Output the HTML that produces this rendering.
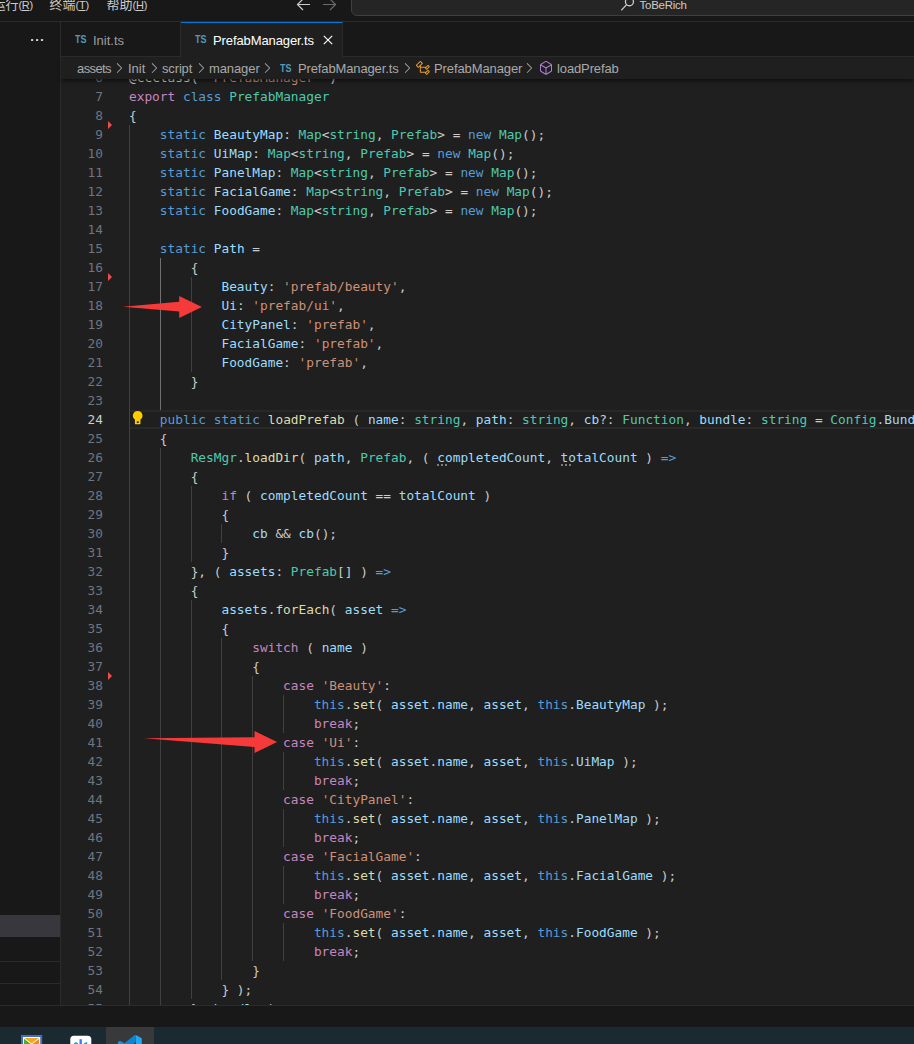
<!DOCTYPE html>
<html lang="zh-CN">
<head>
<meta charset="utf-8">
<title>PrefabManager.ts - ToBeRich</title>
<style>
html,body{margin:0;padding:0}
body{width:914px;height:1044px;overflow:hidden;position:relative;background:#1f1f1f;color:#cccccc;
 font-family:"Liberation Sans","Noto Sans CJK SC",sans-serif;font-size:13px}
.abs{position:absolute}
#title{left:0;top:0;width:914px;height:21px;background:#181818;border-bottom:1px solid #2b2b2b;overflow:hidden}
#title .m .l{font-size:11px;letter-spacing:-0.3px}
#title .m u{text-decoration-thickness:1px;text-underline-offset:1px}
#title .m{position:absolute;top:-4.4px;line-height:18px;font-size:13px;color:#cccccc;white-space:nowrap}
#search{left:351px;top:-10px;width:600px;height:24px;border:1px solid #404040;border-radius:6px;background:#252525}
#side{left:0;top:22px;width:60px;height:983px;background:#181818;border-right:1px solid #2b2b2b}
#tabs{left:61px;top:22px;width:853px;height:34px;background:#181818;border-bottom:1px solid #2b2b2b}
.tab{position:absolute;top:0;height:34px;border-right:1px solid #2b2b2b;white-space:nowrap}
.tab .lbl{position:absolute;top:10px;line-height:18px;font-size:13px}
.ts{position:absolute;font-weight:bold;font-size:11px;color:#519aba;line-height:12px;transform:scaleX(.82);transform-origin:0 0}
.cv{position:absolute;top:3px;fill:#a9a9a9}
#crumbs{left:61px;top:57px;width:853px;height:22px;background:#1f1f1f;white-space:nowrap;z-index:3;box-shadow:0 3px 4px -1px rgba(0,0,0,.55)}
#crumbs span{position:absolute;top:2.5px;line-height:18px;font-size:13px;color:#a9a9a9}
#crumbs svg{position:absolute}
#ed{left:61px;top:79px;width:853px;height:926px;overflow:hidden;background:#1f1f1f;
 font-family:"DejaVu Sans Mono","Liberation Mono",monospace;font-size:12.8px;line-height:19px}
.ln{position:absolute;left:0;width:853px;height:19px;white-space:pre}
.ln .n{position:absolute;left:0;width:42px;text-align:right;color:#6e7681;font-weight:normal}
.ln .tx{position:absolute;left:68px;top:0;color:#cccccc}
.ln.cur{box-sizing:border-box}
.ln.cur::before{content:"";position:absolute;left:68px;right:0;top:0;height:19px;box-sizing:border-box;border-top:2px solid #282828;border-bottom:2px solid #282828}
.ln.cur .n{color:#cccccc}
.g{position:absolute;top:0;width:1px;height:19px;background:#404040}
.g.ga{background:#707070}
.k{color:#569cd6}.c{color:#c586c0}.t{color:#4ec9b0}.v{color:#9cdcfe}.f{color:#dcdcaa}.s{color:#ce9178}
.h{position:relative}
.h::after{content:"";position:absolute;left:0;top:14.4px;width:2px;height:2px;border-radius:1px;background:rgba(238,238,238,.6);box-shadow:4px 0 rgba(238,238,238,.6),8px 0 rgba(238,238,238,.6)}
.tri{position:absolute;width:0;height:0;border-left:4.6px solid #f14c4c;border-top:4px solid transparent;border-bottom:4px solid transparent}
#status{left:0;top:1005px;width:914px;height:22px;background:#181818;border-top:1px solid #2b2b2b;box-sizing:border-box;z-index:4}
#task{left:0;top:1027px;width:914px;height:17px;background:#1b2a31;overflow:hidden}
</style>
</head>
<body>
<div id="title" class="abs">
  <span class="m" style="left:-7.6px">运行<span class="l">(<u>R</u>)</span></span>
  <span class="m" style="left:49.6px">终端<span class="l">(<u>T</u>)</span></span>
  <span class="m" style="left:106.6px">帮助<span class="l">(<u>H</u>)</span></span>
  <svg class="abs" style="left:295.4px;top:-4px" width="44" height="16" viewBox="0 0 44 16" fill="none" stroke-width="1.2">
    <path d="M15 8.5H2.5M8 3L2.5 8.5L8 14" stroke="#cccccc"/>
    <path d="M28 8.5H40.5M35 3L40.5 8.5L35 14" stroke="#6b6b6b"/>
  </svg>
  <div id="search" class="abs"></div>
  <svg class="abs" style="left:621px;top:-2px" width="14" height="14" viewBox="0 0 14 14" fill="none" stroke="#cccccc" stroke-width="1.3"><circle cx="8.45" cy="3.75" r="4"/><path d="M5.6 6.6L0.3 12.3"/></svg>
  <span class="m" style="left:639.5px;top:-4.3px;font-size:11.5px;letter-spacing:-0.25px">ToBeRich</span>
</div>
<div id="side" class="abs">
  <svg class="abs" style="left:28px;top:14px" width="18" height="8" viewBox="28 36 18 8" fill="#d0d0d0"><rect x="31" y="39" width="2.2" height="2.1" rx=".5"/><rect x="36" y="39" width="2.2" height="2.1" rx=".5"/><rect x="40.9" y="39" width="2.2" height="2.1" rx=".5"/></svg>
  <div class="abs" style="left:0;top:893px;width:60px;height:22px;background:#37373d"></div>
  <div class="abs" style="left:0;top:939px;width:60px;height:1px;background:#2b2b2b"></div>
  <div class="abs" style="left:0;top:961px;width:60px;height:1px;background:#2b2b2b"></div>
</div>
<div id="tabs" class="abs">
  <div class="tab" style="left:0;width:119px"><span class="ts" style="left:14px;top:11px">TS</span><span class="lbl" style="left:32px;color:#9d9d9d">Init.ts</span></div>
  <div class="tab" style="left:120px;width:161px;height:34px;background:#1f1f1f;border-top:1px solid #0078d4;top:0">
    <span class="ts" style="left:14px;top:10px">TS</span><span class="lbl" style="left:32px;top:9px;color:#ffffff;letter-spacing:-0.1px">PrefabManager.ts</span>
    <svg class="abs" style="left:142.2px;top:12px" width="10" height="10" viewBox="0 0 10 10" stroke="#ffffff" stroke-width="1.15" fill="none"><path d="M0.8 0.8L9.2 9.2M9.2 0.8L0.8 9.2"/></svg>
  </div>
</div>
<div id="crumbs" class="abs">
  <span style="left:16px;letter-spacing:-0.6px">assets</span><svg class="cv" style="left:49.8px" width="16" height="16" viewBox="0 0 16 16"><path d="M10.072 8.024L5.715 3.667l.618-.62L11 7.716v.618L6.333 13l-.618-.619 4.357-4.357z"/></svg>
  <span style="left:67px">Init</span><svg class="cv" style="left:84.8px" width="16" height="16" viewBox="0 0 16 16"><path d="M10.072 8.024L5.715 3.667l.618-.62L11 7.716v.618L6.333 13l-.618-.619 4.357-4.357z"/></svg>
  <span style="left:101px;letter-spacing:-0.15px">script</span><svg class="cv" style="left:131.6px" width="16" height="16" viewBox="0 0 16 16"><path d="M10.072 8.024L5.715 3.667l.618-.62L11 7.716v.618L6.333 13l-.618-.619 4.357-4.357z"/></svg>
  <span style="left:148px;letter-spacing:-0.1px">manager</span><svg class="cv" style="left:198.3px" width="16" height="16" viewBox="0 0 16 16"><path d="M10.072 8.024L5.715 3.667l.618-.62L11 7.716v.618L6.333 13l-.618-.619 4.357-4.357z"/></svg>
  <b class="ts" style="left:219px;top:5px">TS</b>
  <span style="left:237px;letter-spacing:-0.13px">PrefabManager.ts</span><svg class="cv" style="left:337.8px" width="16" height="16" viewBox="0 0 16 16"><path d="M10.072 8.024L5.715 3.667l.618-.62L11 7.716v.618L6.333 13l-.618-.619 4.357-4.357z"/></svg>
  <svg class="abs" style="left:354px;top:3px" width="16" height="16" viewBox="0 0 16 16"><path fill="#ee9d28" d="M11.34 9.71h.71l2.67-2.67v-.71L13.38 5h-.7l-1.82 1.8h-5V5.56l1.86-1.85V3l-2-2H5L1 5v.71l2 2h.71l1.14-1.15v5.79l.5.5H10v.52l1.33 1.34h.71l2.67-2.67v-.71L13.37 10h-.7l-1.86 1.85h-5v-4H10v.48l1.34 1.38zm1.69-3.65l.63.63-2 2-.63-.63 2-2zm0 5l.63.63-2 2-.63-.63 2-2zM3.35 6.65l-1.29-1.3 3.29-3.29 1.3 1.29-3.3 3.3z"/></svg>
  <span style="left:373px;letter-spacing:-0.1px">PrefabManager</span><svg class="cv" style="left:460.3px" width="16" height="16" viewBox="0 0 16 16"><path d="M10.072 8.024L5.715 3.667l.618-.62L11 7.716v.618L6.333 13l-.618-.619 4.357-4.357z"/></svg>
  <svg class="abs" style="left:476.5px;top:3px" width="16" height="16" viewBox="0 0 16 16"><path fill="#b180d7" d="M13.51 4l-5-3h-1l-5 3-.49.86v6l.49.85 5 3h1l5-3 .49-.85v-6L13.51 4zm-6 9.56l-4.5-2.7V5.7l4.5 2.45v5.41zM3.27 4.7l4.74-2.84 4.74 2.84-4.74 2.59L3.27 4.7zm9.74 6.16l-4.5 2.7V8.15l4.5-2.45v5.16z"/></svg>
  <span style="left:496px;letter-spacing:-0.12px">loadPrefab</span>
</div>
<div id="ed" class="abs">
<div class="ln" style="top:-11px"><b class="n">6</b><span class="tx">@<span class="f">ccclass</span>( <span class="s">'PrefabManager'</span> )</span></div>
<div class="ln" style="top:8px"><b class="n">7</b><span class="tx"><span class="c">export</span> <span class="k">class</span> <span class="t">PrefabManager</span></span></div>
<div class="ln" style="top:27px"><b class="n">8</b><span class="tx">{</span></div>
<div class="ln" style="top:46px"><b class="n">9</b><i class="g" style="left:68px"></i><span class="tx">    <span class="k">static</span> <span class="v">BeautyMap</span>: <span class="t">Map</span>&lt;<span class="t">string</span>, <span class="t">Prefab</span>&gt; = <span class="k">new</span> <span class="t">Map</span>();</span></div>
<div class="ln" style="top:65px"><b class="n">10</b><i class="g" style="left:68px"></i><span class="tx">    <span class="k">static</span> <span class="v">UiMap</span>: <span class="t">Map</span>&lt;<span class="t">string</span>, <span class="t">Prefab</span>&gt; = <span class="k">new</span> <span class="t">Map</span>();</span></div>
<div class="ln" style="top:84px"><b class="n">11</b><i class="g" style="left:68px"></i><span class="tx">    <span class="k">static</span> <span class="v">PanelMap</span>: <span class="t">Map</span>&lt;<span class="t">string</span>, <span class="t">Prefab</span>&gt; = <span class="k">new</span> <span class="t">Map</span>();</span></div>
<div class="ln" style="top:103px"><b class="n">12</b><i class="g" style="left:68px"></i><span class="tx">    <span class="k">static</span> <span class="v">FacialGame</span>: <span class="t">Map</span>&lt;<span class="t">string</span>, <span class="t">Prefab</span>&gt; = <span class="k">new</span> <span class="t">Map</span>();</span></div>
<div class="ln" style="top:122px"><b class="n">13</b><i class="g" style="left:68px"></i><span class="tx">    <span class="k">static</span> <span class="v">FoodGame</span>: <span class="t">Map</span>&lt;<span class="t">string</span>, <span class="t">Prefab</span>&gt; = <span class="k">new</span> <span class="t">Map</span>();</span></div>
<div class="ln" style="top:141px"><b class="n">14</b><i class="g" style="left:68px"></i><span class="tx"></span></div>
<div class="ln" style="top:160px"><b class="n">15</b><i class="g" style="left:68px"></i><span class="tx">    <span class="k">static</span> <span class="v">Path</span> =</span></div>
<div class="ln" style="top:179px"><b class="n">16</b><i class="g" style="left:68px"></i><i class="g ga" style="left:99px"></i><span class="tx">        {</span></div>
<div class="ln" style="top:198px"><b class="n">17</b><i class="g" style="left:68px"></i><i class="g ga" style="left:99px"></i><i class="g" style="left:130px"></i><span class="tx">            <span class="v">Beauty</span>: <span class="s">'prefab/beauty'</span>,</span></div>
<div class="ln" style="top:217px"><b class="n">18</b><i class="g" style="left:68px"></i><i class="g ga" style="left:99px"></i><i class="g" style="left:130px"></i><span class="tx">            <span class="v">Ui</span>: <span class="s">'prefab/ui'</span>,</span></div>
<div class="ln" style="top:236px"><b class="n">19</b><i class="g" style="left:68px"></i><i class="g ga" style="left:99px"></i><i class="g" style="left:130px"></i><span class="tx">            <span class="v">CityPanel</span>: <span class="s">'prefab'</span>,</span></div>
<div class="ln" style="top:255px"><b class="n">20</b><i class="g" style="left:68px"></i><i class="g ga" style="left:99px"></i><i class="g" style="left:130px"></i><span class="tx">            <span class="v">FacialGame</span>: <span class="s">'prefab'</span>,</span></div>
<div class="ln" style="top:274px"><b class="n">21</b><i class="g" style="left:68px"></i><i class="g ga" style="left:99px"></i><i class="g" style="left:130px"></i><span class="tx">            <span class="v">FoodGame</span>: <span class="s">'prefab'</span>,</span></div>
<div class="ln" style="top:293px"><b class="n">22</b><i class="g" style="left:68px"></i><i class="g ga" style="left:99px"></i><span class="tx">        }</span></div>
<div class="ln" style="top:312px"><b class="n">23</b><i class="g" style="left:68px"></i><i class="g ga" style="left:99px"></i><span class="tx"></span></div>
<div class="ln cur" style="top:331px"><b class="n">24</b><i class="g" style="left:68px"></i><span class="tx">    <span class="k">public</span> <span class="k">static</span> <span class="f">loadPrefab</span> ( <span class="v">name</span>: <span class="t">string</span>, <span class="v">path</span>: <span class="t">string</span>, <span class="v">cb</span>?: <span class="t">Function</span>, <span class="v">bundle</span>: <span class="t">string</span> = <span class="t">Config</span>.<span class="v">BundleName</span> )</span></div>
<div class="ln" style="top:350px"><b class="n">25</b><i class="g" style="left:68px"></i><span class="tx">    {</span></div>
<div class="ln" style="top:369px"><b class="n">26</b><i class="g" style="left:68px"></i><i class="g" style="left:99px"></i><span class="tx">        <span class="t">ResMgr</span>.<span class="f">loadDir</span>( <span class="v">path</span>, <span class="t">Prefab</span>, ( <span class="v h">completedCount</span>, <span class="v h">totalCount</span> ) <span class="k">=&gt;</span></span></div>
<div class="ln" style="top:388px"><b class="n">27</b><i class="g" style="left:68px"></i><i class="g" style="left:99px"></i><span class="tx">        {</span></div>
<div class="ln" style="top:407px"><b class="n">28</b><i class="g" style="left:68px"></i><i class="g" style="left:99px"></i><i class="g" style="left:130px"></i><span class="tx">            <span class="c">if</span> ( <span class="v">completedCount</span> == <span class="v">totalCount</span> )</span></div>
<div class="ln" style="top:426px"><b class="n">29</b><i class="g" style="left:68px"></i><i class="g" style="left:99px"></i><i class="g" style="left:130px"></i><span class="tx">            {</span></div>
<div class="ln" style="top:445px"><b class="n">30</b><i class="g" style="left:68px"></i><i class="g" style="left:99px"></i><i class="g" style="left:130px"></i><i class="g" style="left:160px"></i><span class="tx">                <span class="v">cb</span> &amp;&amp; <span class="v">cb</span>();</span></div>
<div class="ln" style="top:464px"><b class="n">31</b><i class="g" style="left:68px"></i><i class="g" style="left:99px"></i><i class="g" style="left:130px"></i><span class="tx">            }</span></div>
<div class="ln" style="top:483px"><b class="n">32</b><i class="g" style="left:68px"></i><i class="g" style="left:99px"></i><span class="tx">        }, ( <span class="v">assets</span>: <span class="t">Prefab</span>[] ) <span class="k">=&gt;</span></span></div>
<div class="ln" style="top:502px"><b class="n">33</b><i class="g" style="left:68px"></i><i class="g" style="left:99px"></i><span class="tx">        {</span></div>
<div class="ln" style="top:521px"><b class="n">34</b><i class="g" style="left:68px"></i><i class="g" style="left:99px"></i><i class="g" style="left:130px"></i><span class="tx">            <span class="v">assets</span>.<span class="f">forEach</span>( <span class="v">asset</span> <span class="k">=&gt;</span></span></div>
<div class="ln" style="top:540px"><b class="n">35</b><i class="g" style="left:68px"></i><i class="g" style="left:99px"></i><i class="g" style="left:130px"></i><span class="tx">            {</span></div>
<div class="ln" style="top:559px"><b class="n">36</b><i class="g" style="left:68px"></i><i class="g" style="left:99px"></i><i class="g" style="left:130px"></i><i class="g" style="left:160px"></i><span class="tx">                <span class="c">switch</span> ( <span class="v">name</span> )</span></div>
<div class="ln" style="top:578px"><b class="n">37</b><i class="g" style="left:68px"></i><i class="g" style="left:99px"></i><i class="g" style="left:130px"></i><i class="g" style="left:160px"></i><span class="tx">                {</span></div>
<div class="ln" style="top:597px"><b class="n">38</b><i class="g" style="left:68px"></i><i class="g" style="left:99px"></i><i class="g" style="left:130px"></i><i class="g" style="left:160px"></i><i class="g" style="left:191px"></i><span class="tx">                    <span class="c">case</span> <span class="s">'Beauty'</span>:</span></div>
<div class="ln" style="top:616px"><b class="n">39</b><i class="g" style="left:68px"></i><i class="g" style="left:99px"></i><i class="g" style="left:130px"></i><i class="g" style="left:160px"></i><i class="g" style="left:191px"></i><i class="g" style="left:222px"></i><span class="tx">                        <span class="k">this</span>.<span class="f">set</span>( <span class="v">asset</span>.<span class="v">name</span>, <span class="v">asset</span>, <span class="k">this</span>.<span class="v">BeautyMap</span> );</span></div>
<div class="ln" style="top:635px"><b class="n">40</b><i class="g" style="left:68px"></i><i class="g" style="left:99px"></i><i class="g" style="left:130px"></i><i class="g" style="left:160px"></i><i class="g" style="left:191px"></i><i class="g" style="left:222px"></i><span class="tx">                        <span class="c">break</span>;</span></div>
<div class="ln" style="top:654px"><b class="n">41</b><i class="g" style="left:68px"></i><i class="g" style="left:99px"></i><i class="g" style="left:130px"></i><i class="g" style="left:160px"></i><i class="g" style="left:191px"></i><span class="tx">                    <span class="c">case</span> <span class="s">'Ui'</span>:</span></div>
<div class="ln" style="top:673px"><b class="n">42</b><i class="g" style="left:68px"></i><i class="g" style="left:99px"></i><i class="g" style="left:130px"></i><i class="g" style="left:160px"></i><i class="g" style="left:191px"></i><i class="g" style="left:222px"></i><span class="tx">                        <span class="k">this</span>.<span class="f">set</span>( <span class="v">asset</span>.<span class="v">name</span>, <span class="v">asset</span>, <span class="k">this</span>.<span class="v">UiMap</span> );</span></div>
<div class="ln" style="top:692px"><b class="n">43</b><i class="g" style="left:68px"></i><i class="g" style="left:99px"></i><i class="g" style="left:130px"></i><i class="g" style="left:160px"></i><i class="g" style="left:191px"></i><i class="g" style="left:222px"></i><span class="tx">                        <span class="c">break</span>;</span></div>
<div class="ln" style="top:711px"><b class="n">44</b><i class="g" style="left:68px"></i><i class="g" style="left:99px"></i><i class="g" style="left:130px"></i><i class="g" style="left:160px"></i><i class="g" style="left:191px"></i><span class="tx">                    <span class="c">case</span> <span class="s">'CityPanel'</span>:</span></div>
<div class="ln" style="top:730px"><b class="n">45</b><i class="g" style="left:68px"></i><i class="g" style="left:99px"></i><i class="g" style="left:130px"></i><i class="g" style="left:160px"></i><i class="g" style="left:191px"></i><i class="g" style="left:222px"></i><span class="tx">                        <span class="k">this</span>.<span class="f">set</span>( <span class="v">asset</span>.<span class="v">name</span>, <span class="v">asset</span>, <span class="k">this</span>.<span class="v">PanelMap</span> );</span></div>
<div class="ln" style="top:749px"><b class="n">46</b><i class="g" style="left:68px"></i><i class="g" style="left:99px"></i><i class="g" style="left:130px"></i><i class="g" style="left:160px"></i><i class="g" style="left:191px"></i><i class="g" style="left:222px"></i><span class="tx">                        <span class="c">break</span>;</span></div>
<div class="ln" style="top:768px"><b class="n">47</b><i class="g" style="left:68px"></i><i class="g" style="left:99px"></i><i class="g" style="left:130px"></i><i class="g" style="left:160px"></i><i class="g" style="left:191px"></i><span class="tx">                    <span class="c">case</span> <span class="s">'FacialGame'</span>:</span></div>
<div class="ln" style="top:787px"><b class="n">48</b><i class="g" style="left:68px"></i><i class="g" style="left:99px"></i><i class="g" style="left:130px"></i><i class="g" style="left:160px"></i><i class="g" style="left:191px"></i><i class="g" style="left:222px"></i><span class="tx">                        <span class="k">this</span>.<span class="f">set</span>( <span class="v">asset</span>.<span class="v">name</span>, <span class="v">asset</span>, <span class="k">this</span>.<span class="v">FacialGame</span> );</span></div>
<div class="ln" style="top:806px"><b class="n">49</b><i class="g" style="left:68px"></i><i class="g" style="left:99px"></i><i class="g" style="left:130px"></i><i class="g" style="left:160px"></i><i class="g" style="left:191px"></i><i class="g" style="left:222px"></i><span class="tx">                        <span class="c">break</span>;</span></div>
<div class="ln" style="top:825px"><b class="n">50</b><i class="g" style="left:68px"></i><i class="g" style="left:99px"></i><i class="g" style="left:130px"></i><i class="g" style="left:160px"></i><i class="g" style="left:191px"></i><span class="tx">                    <span class="c">case</span> <span class="s">'FoodGame'</span>:</span></div>
<div class="ln" style="top:844px"><b class="n">51</b><i class="g" style="left:68px"></i><i class="g" style="left:99px"></i><i class="g" style="left:130px"></i><i class="g" style="left:160px"></i><i class="g" style="left:191px"></i><i class="g" style="left:222px"></i><span class="tx">                        <span class="k">this</span>.<span class="f">set</span>( <span class="v">asset</span>.<span class="v">name</span>, <span class="v">asset</span>, <span class="k">this</span>.<span class="v">FoodGame</span> );</span></div>
<div class="ln" style="top:863px"><b class="n">52</b><i class="g" style="left:68px"></i><i class="g" style="left:99px"></i><i class="g" style="left:130px"></i><i class="g" style="left:160px"></i><i class="g" style="left:191px"></i><i class="g" style="left:222px"></i><span class="tx">                        <span class="c">break</span>;</span></div>
<div class="ln" style="top:882px"><b class="n">53</b><i class="g" style="left:68px"></i><i class="g" style="left:99px"></i><i class="g" style="left:130px"></i><i class="g" style="left:160px"></i><span class="tx">                }</span></div>
<div class="ln" style="top:901px"><b class="n">54</b><i class="g" style="left:68px"></i><i class="g" style="left:99px"></i><i class="g" style="left:130px"></i><span class="tx">            } );</span></div>
<div class="ln" style="top:920px"><b class="n">55</b><i class="g" style="left:68px"></i><i class="g" style="left:99px"></i><span class="tx">        }, <span class="v">bundle</span> )</span></div>
<svg class="abs" style="left:70.1px;top:331.9px;z-index:2" width="12" height="15" viewBox="0 0 12 15"><path fill="#ffcc00" d="M6.7 0.1a4.75 4.6 0 0 1 2.75 8.35v4.4a.45.45 0 0 1-.45.45H4.35a.45.45 0 0 1-.45-.45v-4.4A4.75 4.6 0 0 1 6.7 0.1z"/><rect x="5.8" y="10.3" width="1.9" height="1.7" fill="#1f1f1f"/></svg>
<i class="tri" style="left:46.7px;top:42px"></i>
<i class="tri" style="left:46.7px;top:194px"></i>
<i class="tri" style="left:46.7px;top:593px"></i>
</div>
<div id="status" class="abs"></div>
<div id="task" class="abs">
  <div class="abs" style="left:106px;top:0;width:48px;height:17px;background:#37393b"></div>
  <svg class="abs" style="left:0;top:0" width="180" height="17" viewBox="0 1027 180 17">
    <rect x="21" y="1035" width="21.2" height="14" fill="#3f6fc6"/>
    <rect x="23" y="1037" width="17.2" height="12" fill="#ffffff"/>
    <polygon points="24.4,1038 38.8,1038 31.6,1043.4" fill="#f3a91f"/>
    <polygon points="24,1038.8 30.9,1044 24,1050" fill="#4caf2a"/>
    <polygon points="39.2,1038.8 32.3,1044 39.2,1050" fill="#ee8a1c"/>
    <rect x="70.3" y="1035.7" width="21" height="20" rx="3.6" fill="#ffffff"/>
    <rect x="79.5" y="1039.2" width="2.4" height="8" fill="#3a7bff"/>
    <polygon points="74,1043.2 75.6,1042 78,1043 78,1046 74,1046" fill="#12b5b5"/>
    <polygon points="83.9,1043.2 86.6,1042 87.2,1042.3 87.2,1046 83.9,1046" fill="#12b5b5"/>
    <polygon points="135.9,1034.9 141.8,1038.2 141.8,1046 135.9,1046" fill="#23a9f2"/>
    <polygon points="134.7,1034.9 135.9,1034.9 135.9,1041.7 133,1044.5 122.8,1044.5 124.4,1043.2" fill="#0f85d1"/>
    <polygon points="117.9,1042 120,1040.8 124.5,1043.3 123,1044.5 117.9,1044.5" fill="#1b8fdd"/>
  </svg>
</div>
<svg class="abs" style="left:0;top:0;z-index:5" width="914" height="1044" viewBox="0 0 914 1044">
  <polygon points="122.9,306.7 179.2,301.7 179.2,296 201.9,306.9 179.2,318.1 179.2,311.5" fill="#f63a3a"/>
  <polygon points="143.8,738.2 254.5,737.2 254.5,731.1 277.1,741.9 254.5,753 254.5,747" fill="#f63a3a"/>
</svg>
</body>
</html>
